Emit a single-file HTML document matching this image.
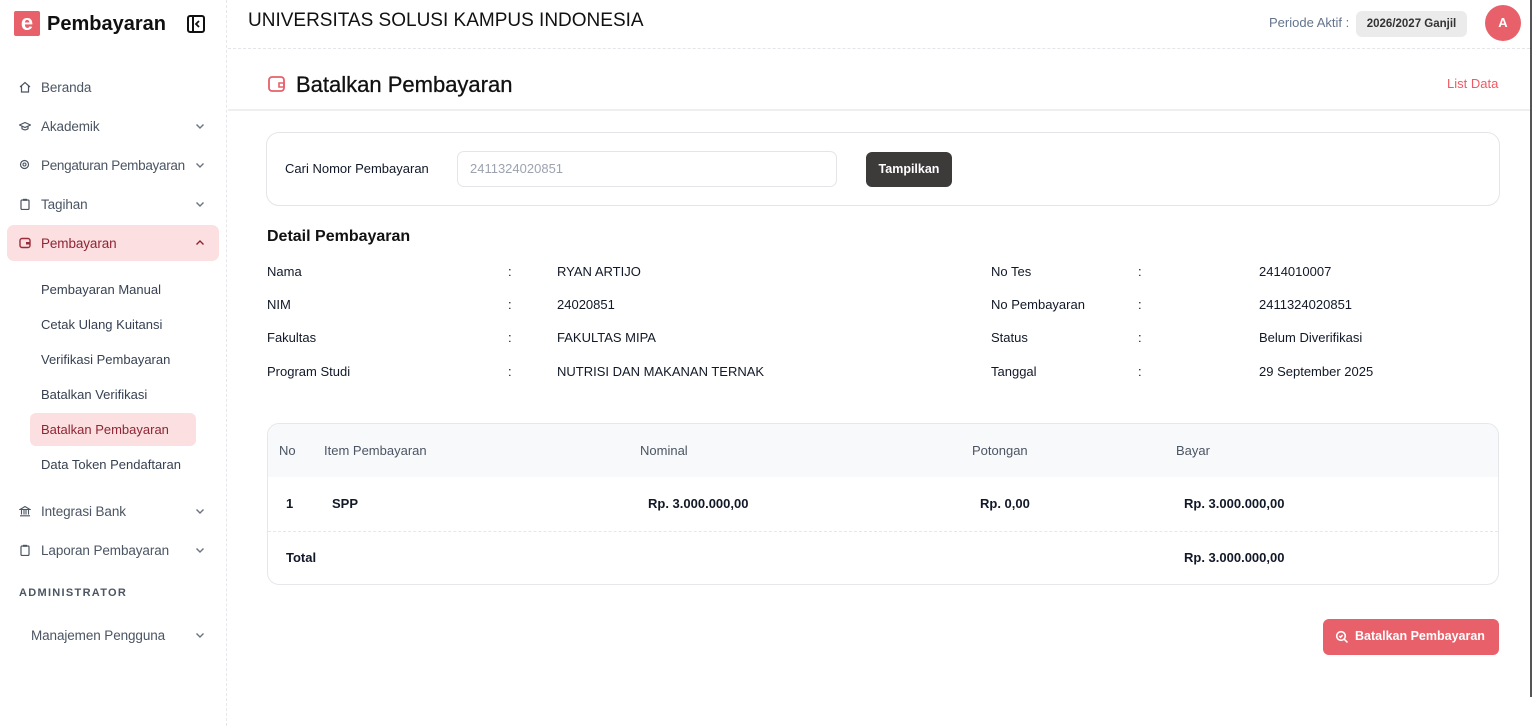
<!DOCTYPE html>
<html><head><meta charset="utf-8"><style>
*{box-sizing:border-box;margin:0;padding:0}
body{width:1534px;height:726px;overflow:hidden;background:#fff;font-family:"Liberation Sans",sans-serif;color:#1f2937;position:relative}
.a{position:absolute;white-space:nowrap}
.side{position:absolute;left:0;top:0;width:227px;height:726px;border-right:1px dashed #e5e7eb}
.nav{font-size:13.5px;color:#4b5563;letter-spacing:-0.1px}
.ic{position:absolute;width:12px;height:12px}
.chev{position:absolute;left:194px;width:12px;height:12px}
.sub{font-size:13px;color:#374151;left:41px}
.lbl{font-size:13px;color:#111827}
.val{font-size:13px;color:#111827;font-weight:bold}
</style></head><body>
<div class="side">
  <div class="a" style="left:14px;top:11px;width:26px;height:25px;background:#e8606a;border-radius:2px;color:#fff;font-weight:bold;font-size:22px;text-align:center;line-height:24px">e</div>
  <div class="a" style="left:47px;top:13px;font-size:20px;font-weight:bold;color:#111">Pembayaran</div>
  <svg class="a" style="left:187px;top:15px" width="18" height="18" viewBox="0 0 18 18"><rect x="1" y="1" width="16" height="16" rx="2" fill="none" stroke="#111" stroke-width="2"/><line x1="6" y1="1" x2="6" y2="17" stroke="#111" stroke-width="2"/><path d="M12 6l-3 3 3 3" fill="none" stroke="#111" stroke-width="1.8"/></svg>

  <svg class="ic a" style="left:19px;top:81px" viewBox="0 0 12 12"><path d="M1 6L6 1.5 11 6M2.5 5v6h7V5" fill="none" stroke="#4b5563" stroke-width="1.2"/></svg>
  <div class="a nav" style="left:41px;top:80px">Beranda</div>
  <svg class="ic a" style="left:19px;top:120px" viewBox="0 0 12 12"><path d="M0.5 5L6 2.5 11.5 5 6 7.5z M3 6.3v2.5c2 1.4 4 1.4 6 0V6.3" fill="none" stroke="#4b5563" stroke-width="1.2"/></svg>
  <div class="a nav" style="left:41px;top:119px">Akademik</div>
  <svg class="chev a" style="top:120px" viewBox="0 0 12 12"><path d="M2.5 4.5L6 8l3.5-3.5" fill="none" stroke="#6b7280" stroke-width="1.4"/></svg>
  <svg class="ic a" style="left:19px;top:159px" viewBox="0 0 12 12"><circle cx="5.5" cy="5.5" r="4" fill="none" stroke="#4b5563" stroke-width="1.2"/><circle cx="5.5" cy="5.5" r="1.5" fill="none" stroke="#4b5563" stroke-width="1.1"/></svg>
  <div class="a nav" style="left:41px;top:158px;letter-spacing:-0.3px">Pengaturan Pembayaran</div>
  <svg class="chev a" style="top:159px" viewBox="0 0 12 12"><path d="M2.5 4.5L6 8l3.5-3.5" fill="none" stroke="#6b7280" stroke-width="1.4"/></svg>
  <svg class="ic a" style="left:19px;top:198px" viewBox="0 0 12 12"><rect x="2" y="2" width="8" height="9.5" rx="1" fill="none" stroke="#4b5563" stroke-width="1.2"/><rect x="4" y="0.8" width="4" height="2" fill="#4b5563"/></svg>
  <div class="a nav" style="left:41px;top:197px">Tagihan</div>
  <svg class="chev a" style="top:198px" viewBox="0 0 12 12"><path d="M2.5 4.5L6 8l3.5-3.5" fill="none" stroke="#6b7280" stroke-width="1.4"/></svg>

  <div class="a" style="left:7px;top:225px;width:212px;height:36px;background:#fbdfe1;border-radius:7px"></div>
  <svg class="ic a" style="left:19px;top:237px" viewBox="0 0 12 12"><rect x="1" y="1.5" width="10" height="9" rx="2" fill="none" stroke="#9b2c3a" stroke-width="1.4"/><rect x="7" y="5" width="4" height="2.5" fill="#9b2c3a"/></svg>
  <div class="a nav" style="left:41px;top:236px;color:#8f2534">Pembayaran</div>
  <svg class="chev a" style="top:237px" viewBox="0 0 12 12"><path d="M2.5 7.5L6 4l3.5 3.5" fill="none" stroke="#8f2534" stroke-width="1.4"/></svg>

  <div class="a sub" style="top:282px">Pembayaran Manual</div>
  <div class="a sub" style="top:317px">Cetak Ulang Kuitansi</div>
  <div class="a sub" style="top:352px">Verifikasi Pembayaran</div>
  <div class="a sub" style="top:387px">Batalkan Verifikasi</div>
  <div class="a" style="left:30px;top:413px;width:166px;height:33px;background:#fbdfe1;border-radius:6px"></div>
  <div class="a sub" style="top:422px;color:#8f2534">Batalkan Pembayaran</div>
  <div class="a sub" style="top:457px">Data Token Pendaftaran</div>

  <svg class="ic a" style="left:19px;top:505px" viewBox="0 0 12 12"><path d="M1 4.5L6 1.5 11 4.5zM2.5 5v4.5M5 5v4.5M7 5v4.5M9.5 5v4.5M1 10.8h10" fill="none" stroke="#4b5563" stroke-width="1.1"/></svg>
  <div class="a nav" style="left:41px;top:504px">Integrasi Bank</div>
  <svg class="chev a" style="top:505px" viewBox="0 0 12 12"><path d="M2.5 4.5L6 8l3.5-3.5" fill="none" stroke="#6b7280" stroke-width="1.4"/></svg>
  <svg class="ic a" style="left:19px;top:544px" viewBox="0 0 12 12"><rect x="2" y="2" width="8" height="9.5" rx="1" fill="none" stroke="#4b5563" stroke-width="1.2"/><rect x="4" y="0.8" width="4" height="2" fill="#4b5563"/></svg>
  <div class="a nav" style="left:41px;top:543px">Laporan Pembayaran</div>
  <svg class="chev a" style="top:544px" viewBox="0 0 12 12"><path d="M2.5 4.5L6 8l3.5-3.5" fill="none" stroke="#6b7280" stroke-width="1.4"/></svg>
  <div class="a" style="left:19px;top:587px;font-size:11px;font-weight:bold;letter-spacing:1.3px;color:#4b5563">ADMINISTRATOR</div>
  <div class="a nav" style="left:31px;top:628px">Manajemen Pengguna</div>
  <svg class="chev a" style="top:629px" viewBox="0 0 12 12"><path d="M2.5 4.5L6 8l3.5-3.5" fill="none" stroke="#6b7280" stroke-width="1.4"/></svg>
</div>

<div class="a" style="left:248px;top:10px;font-size:19px;color:#111">UNIVERSITAS SOLUSI KAMPUS INDONESIA</div>
<div class="a" style="left:1269px;top:15px;font-size:13px;color:#64748b">Periode Aktif :</div>
<div class="a" style="left:1356px;top:11px;width:111px;height:26px;background:#ebebeb;border-radius:6px;font-size:11.5px;font-weight:bold;color:#333;text-align:center;line-height:26px">2026/2027 Ganjil</div>
<div class="a" style="left:1485px;top:5px;width:36px;height:36px;border-radius:50%;background:#e8606a;color:#fff;font-size:13px;font-weight:bold;text-align:center;line-height:36px">A</div>
<div class="a" style="left:228px;top:48px;width:1302px;border-top:1px dashed #e3e5e8"></div>
<div class="a" style="left:1530px;top:0;width:2px;height:697px;background:#555"></div>

<svg class="a" style="left:268px;top:75px" width="18" height="18" viewBox="0 0 18 18"><rect x="1" y="2" width="15" height="14" rx="3" fill="none" stroke="#e8606a" stroke-width="1.8"/><path d="M11 8h5v4h-5z" fill="none" stroke="#e8606a" stroke-width="1.6"/></svg>
<div class="a" style="left:296px;top:72px;font-size:22px;color:#111;-webkit-text-stroke:0.3px #111">Batalkan Pembayaran</div>
<div class="a" style="left:1447px;top:76px;font-size:13px;color:#f05a64">List Data</div>
<div class="a" style="left:228px;top:109px;width:1302px;border-top:2px solid #eeeff1"></div>

<div class="a" style="left:266px;top:132px;width:1234px;height:74px;border:1px solid #e3e5e8;border-radius:13px"></div>
<div class="a lbl" style="left:285px;top:161px">Cari Nomor Pembayaran</div>
<div class="a" style="left:457px;top:151px;width:380px;height:36px;border:1px solid #e3e5e8;border-radius:7px;font-size:13px;color:#9ca3af;padding-left:12px;line-height:34px">2411324020851</div>
<div class="a" style="left:866px;top:152px;width:86px;height:35px;background:#3d3a3a;border-radius:6px;color:#fff;font-size:12.5px;font-weight:bold;text-align:center;line-height:35px">Tampilkan</div>

<div class="a" style="left:267px;top:228px;font-size:16px;font-weight:bold;color:#111">Detail Pembayaran</div>
<div class="a lbl" style="left:267px;top:264px">Nama</div><div class="a lbl" style="left:508px;top:264px">:</div><div class="a lbl" style="left:557px;top:264px">RYAN ARTIJO</div>
<div class="a lbl" style="left:267px;top:297px">NIM</div><div class="a lbl" style="left:508px;top:297px">:</div><div class="a lbl" style="left:557px;top:297px">24020851</div>
<div class="a lbl" style="left:267px;top:330px">Fakultas</div><div class="a lbl" style="left:508px;top:330px">:</div><div class="a lbl" style="left:557px;top:330px">FAKULTAS MIPA</div>
<div class="a lbl" style="left:267px;top:364px">Program Studi</div><div class="a lbl" style="left:508px;top:364px">:</div><div class="a lbl" style="left:557px;top:364px">NUTRISI DAN MAKANAN TERNAK</div>
<div class="a lbl" style="left:991px;top:264px">No Tes</div><div class="a lbl" style="left:1138px;top:264px">:</div><div class="a lbl" style="left:1259px;top:264px">2414010007</div>
<div class="a lbl" style="left:991px;top:297px">No Pembayaran</div><div class="a lbl" style="left:1138px;top:297px">:</div><div class="a lbl" style="left:1259px;top:297px">2411324020851</div>
<div class="a lbl" style="left:991px;top:330px">Status</div><div class="a lbl" style="left:1138px;top:330px">:</div><div class="a lbl" style="left:1259px;top:330px">Belum Diverifikasi</div>
<div class="a lbl" style="left:991px;top:364px">Tanggal</div><div class="a lbl" style="left:1138px;top:364px">:</div><div class="a lbl" style="left:1259px;top:364px">29 September 2025</div>

<div class="a" style="left:267px;top:423px;width:1232px;height:162px;border:1px solid #e5e7eb;border-radius:12px;overflow:hidden">
  <div style="height:53px;background:#f8f9fb"></div>
  <div style="position:absolute;left:0;top:107px;width:100%;border-top:1px dashed #e5e7eb"></div>
</div>
<div class="a" style="left:279px;top:443px;font-size:13px;color:#4b5563">No</div>
<div class="a" style="left:324px;top:443px;font-size:13px;color:#4b5563">Item Pembayaran</div>
<div class="a" style="left:640px;top:443px;font-size:13px;color:#4b5563">Nominal</div>
<div class="a" style="left:972px;top:443px;font-size:13px;color:#4b5563">Potongan</div>
<div class="a" style="left:1176px;top:443px;font-size:13px;color:#4b5563">Bayar</div>
<div class="a val" style="left:286px;top:496px">1</div>
<div class="a val" style="left:332px;top:496px">SPP</div>
<div class="a val" style="left:648px;top:496px">Rp. 3.000.000,00</div>
<div class="a val" style="left:980px;top:496px">Rp. 0,00</div>
<div class="a val" style="left:1184px;top:496px">Rp. 3.000.000,00</div>
<div class="a val" style="left:286px;top:550px">Total</div>
<div class="a val" style="left:1184px;top:550px">Rp. 3.000.000,00</div>

<div class="a" style="left:1323px;top:619px;width:176px;height:36px;background:#e8606a;border-radius:6px"></div>
<svg class="a" style="left:1335px;top:630px" width="14" height="14" viewBox="0 0 14 14"><circle cx="6" cy="6" r="4.3" fill="none" stroke="#fff" stroke-width="1.6"/><path d="M9.2 9.2L12.5 12.5M4.3 6l1.3 1.3 2-2.3" fill="none" stroke="#fff" stroke-width="1.5"/></svg>
<div class="a" style="left:1355px;top:629px;font-size:12.5px;font-weight:bold;color:#fff">Batalkan Pembayaran</div>
</body></html>
